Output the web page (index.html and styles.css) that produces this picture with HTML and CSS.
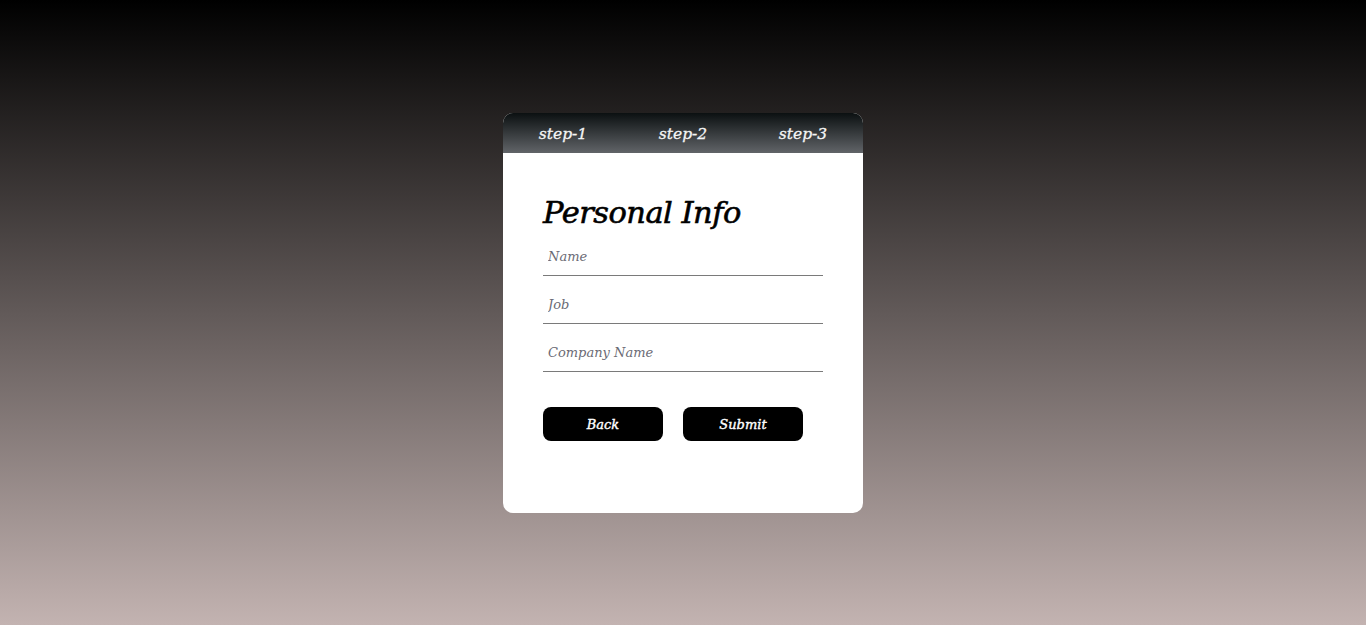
FILE: index.html
```html
<!DOCTYPE html>
<html>
<head>
<meta charset="utf-8">
<link rel="stylesheet" href="styles.css">
</head>
<body>
<main class="page">
  <div class="card">
    <nav class="steps">
      <span class="step">step-1</span>
      <span class="step">step-2</span>
      <span class="step">step-3</span>
    </nav>
    <form class="form">
      <h1 class="title">Personal Info</h1>
      <input class="field" type="text" placeholder="Name">
      <input class="field" type="text" placeholder="Job">
      <input class="field" type="text" placeholder="Company Name">
      <div class="actions">
        <button type="button" class="btn">Back</button>
        <button type="button" class="btn">Submit</button>
      </div>
    </form>
  </div>
</main>
</body>
</html>
```
FILE: styles.css
```css
* { box-sizing: border-box; }
html, body { margin: 0; height: 100%; }
body {
  background: linear-gradient(to bottom, #000000 0%, #c3b3b1 100%);
  font-family: "DejaVu Serif", "Liberation Serif", serif;
  font-style: italic;
}
.page {
  height: 625px;
  display: flex;
  justify-content: center;
  padding-top: 113px;
}
.card {
  width: 360px;
  height: 400px;
  background: #fff;
  border-radius: 10px;
  overflow: hidden;
}
.steps {
  height: 40px;
  display: grid;
  grid-template-columns: repeat(3, 1fr);
  align-items: center;
  background: linear-gradient(to bottom, #0b1011 0%, #616468 100%);
}
.step {
  text-align: center;
  color: #f4f4f4;
  font-size: 15.5px;
  padding-top: 1px;
  -webkit-text-stroke: 0.3px #f4f4f4;
}
.form {
  padding: 38px 40px 0;
  display: flex;
  flex-direction: column;
}
.title {
  margin: 0;
  font-size: 30.5px;
  font-weight: normal;
  line-height: 44px;
  color: #000;
  letter-spacing: -0.5px;
  -webkit-text-stroke: 0.6px #000;
}
.field {
  width: 280px;
  height: 40px;
  border: none;
  border-bottom: 1px solid #7a7a7a;
  padding: 2px 5px 0;
  margin-bottom: 8px;
  font-family: inherit;
  font-style: italic;
  font-size: 13px;
  outline: none;
}
.field::placeholder { color: #6a6a74; }
.field:first-of-type { height: 41px; }
.actions {
  display: flex;
  gap: 20px;
  margin-top: 27px;
}
.btn {
  width: 120px;
  height: 34px;
  border: none;
  border-radius: 8px;
  background: #000;
  color: #fff;
  font-family: inherit;
  font-style: italic;
  font-weight: normal;
  font-size: 13px;
  -webkit-text-stroke: 0.4px #fff;
}
```
